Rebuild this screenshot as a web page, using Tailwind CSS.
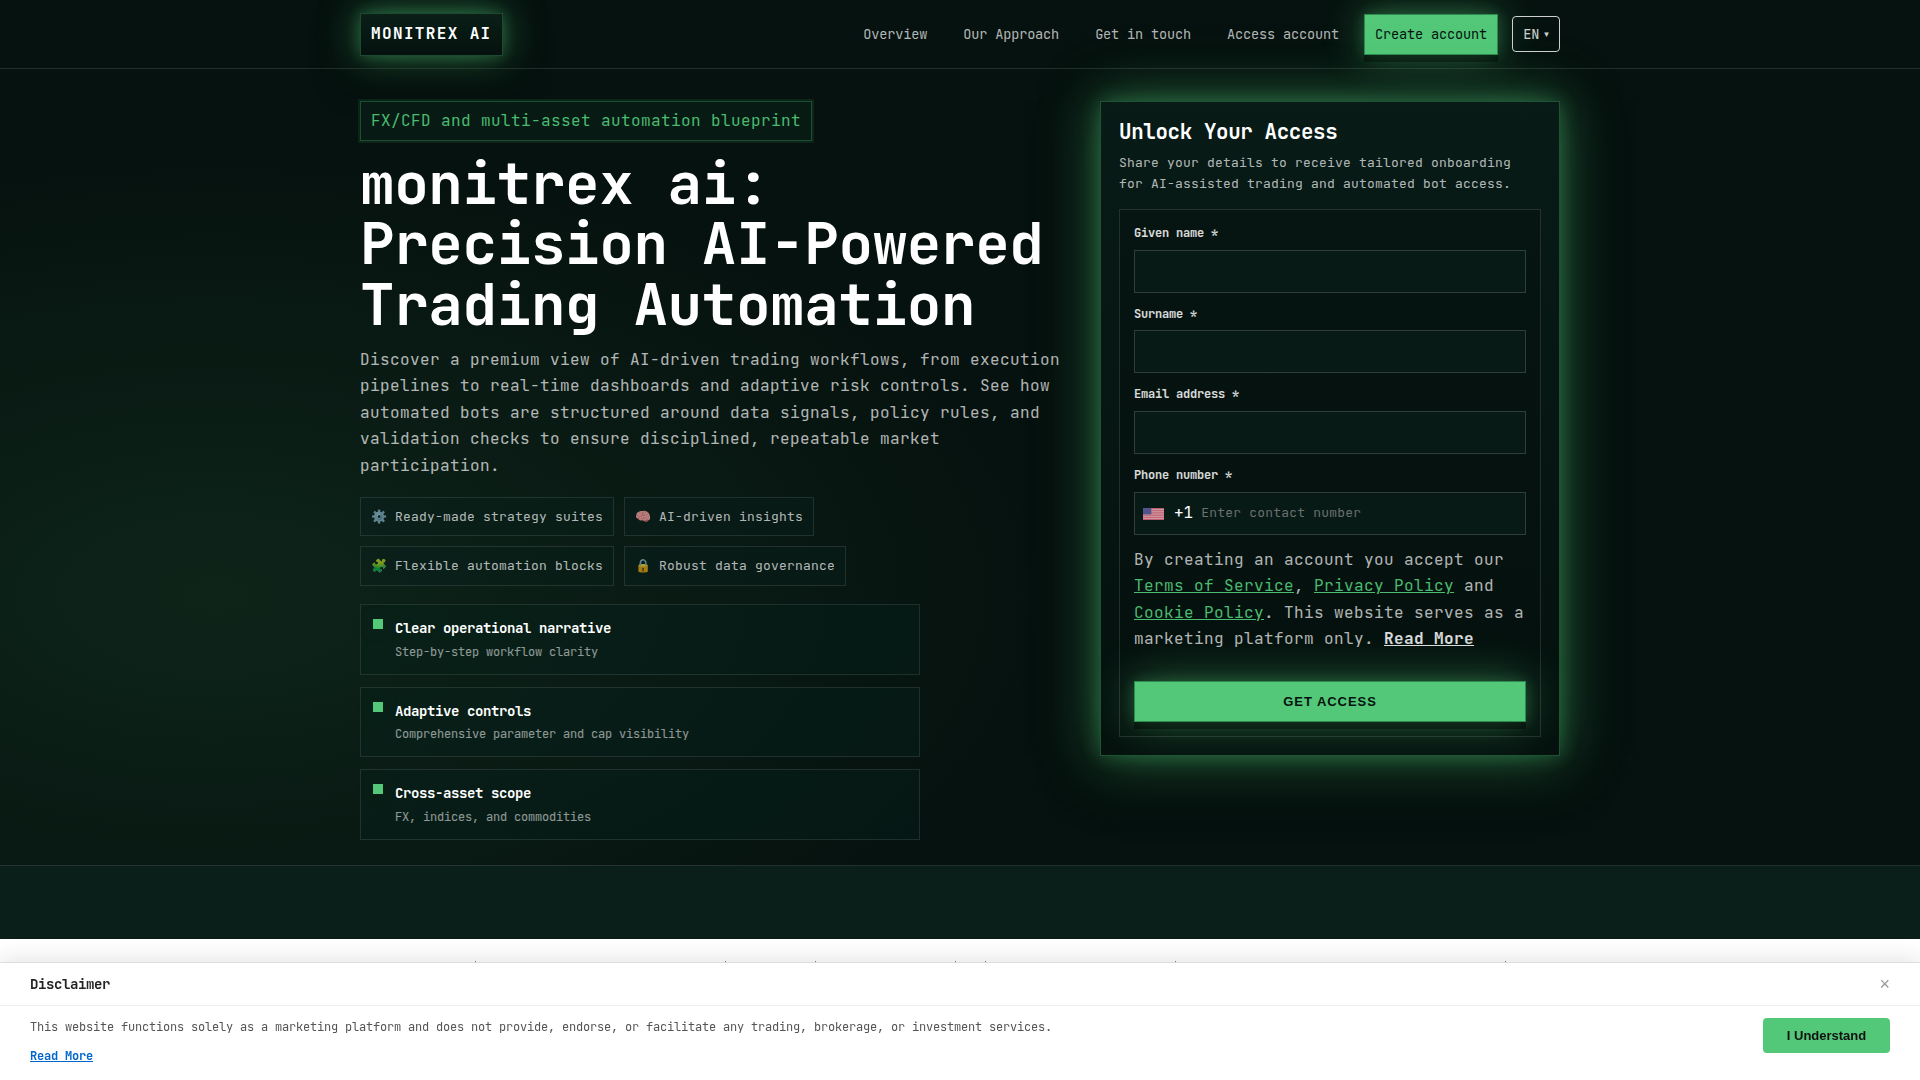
<!DOCTYPE html>
<html lang="en">
<head>
  <meta charset="UTF-8">
  <title>monitrex ai</title>
  <script src="https://cdn.jsdelivr.net/npm/@tailwindcss/browser@4"></script>
</head>
<body class="bg-white font-['JetBrains_Mono','DejaVu_Sans_Mono',monospace] text-base leading-[26.4px] tracking-[0.4px] text-white/70 h-[1080px] overflow-hidden">

  <div class="bg-[#06120f] bg-[radial-gradient(ellipse_840px_440px_at_215px_595px,rgba(80,200,120,0.1),transparent_100%)]">
    <!-- Header -->
    <header class="h-[69px] border-b border-white/12">
      <div class="w-[1200px] mx-auto h-[68px] flex items-center justify-between">
        <a class="h-[43px] px-2.5 flex items-center border border-[#1c4a2f] bg-linear-to-b from-[#0a1f17] to-[#05110e] text-white font-bold tracking-[1.36px] shadow-[0_0_14px_rgba(80,200,120,0.3),0_0_38px_rgba(80,200,120,0.5),0_14px_50px_rgba(0,0,0,0.4)]">MONITREX AI</a>
        <nav class="flex items-center text-[13.6px] tracking-[-0.16px]">
          <a class="mr-9">Overview</a>
          <a class="mr-9">Our Approach</a>
          <a class="mr-9">Get in touch</a>
          <a class="mr-[25px]">Access account</a>
          <a class="h-[41px] px-2.5 flex items-center border border-[#2f8a50] bg-[#52c878] text-[#06120f] shadow-[0_7px_0_rgba(0,0,0,0.4),0_0_14px_rgba(80,200,120,0.25),0_0_42px_rgba(80,200,120,0.45)]">Create account</a>
          <button class="ml-3.5 w-12 h-9 flex items-center justify-center gap-[5px] border border-white/80 rounded text-white/80">EN <span class="font-['DejaVu_Sans',sans-serif] text-[9px] leading-none">▾</span></button>
        </nav>
      </div>
    </header>

    <!-- Hero -->
    <section class="h-[797px] border-b border-white/12 pt-8">
      <div class="w-[1200px] mx-auto flex justify-between items-start">
        <div class="w-[702px]">
          <div class="w-fit py-1.5 px-2.5 border border-[#1c4f31] bg-[#071a14] text-[#4bbb70] ring-2 ring-[#50c878]/10">FX/CFD and multi-asset automation blueprint</div>
          <h1 class="mt-[11.4px] text-[57.6px] leading-[60.48px] font-bold tracking-[-0.38px] text-white whitespace-nowrap">monitrex ai:<br>Precision AI-Powered<br>Trading Automation</h1>
          <p class="mt-[12.7px]">Discover a premium view of AI-driven trading workflows, from execution pipelines to real-time dashboards and adaptive risk controls. See how automated bots are structured around data signals, policy rules, and validation checks to ensure disciplined, repeatable market participation.</p>

          <div class="mt-[18px] w-[560px] flex flex-wrap gap-2.5 text-[13px] leading-[21.45px] tracking-[0.2px]">
            <span class="border border-white/10 bg-[#08201c]/35 px-2.5 py-2 flex gap-2"><span class="tracking-normal">⚙️</span>Ready-made strategy suites</span>
            <span class="border border-white/10 bg-[#08201c]/35 px-2.5 py-2 flex gap-2"><span class="tracking-normal">🧠</span>AI-driven insights</span>
            <span class="border border-white/10 bg-[#08201c]/35 px-2.5 py-2 flex gap-2"><span class="tracking-normal">🧩</span>Flexible automation blocks</span>
            <span class="border border-white/10 bg-[#08201c]/35 px-2.5 py-2 flex gap-2"><span class="tracking-normal">🔒</span>Robust data governance</span>
          </div>

          <div class="mt-[18.3px] w-[560px] flex flex-col gap-3">
            <div class="h-[70.6px] border border-white/10 bg-[#06201c]/40 p-3 flex gap-3">
              <i class="mt-0.5 size-2.5 bg-[#52c878] shadow-[0_0_30px_rgba(80,200,120,0.12)]"></i>
              <div>
                <div class="text-sm leading-[23.1px] font-bold tracking-[-0.4px] text-white">Clear operational narrative</div>
                <div class="text-xs leading-[19.8px] tracking-[-0.2px] text-white/55 mt-[2.3px]">Step-by-step workflow clarity</div>
              </div>
            </div>
            <div class="h-[70.6px] border border-white/10 bg-[#06201c]/40 p-3 flex gap-3">
              <i class="mt-0.5 size-2.5 bg-[#52c878] shadow-[0_0_30px_rgba(80,200,120,0.12)]"></i>
              <div>
                <div class="text-sm leading-[23.1px] font-bold tracking-[-0.4px] text-white">Adaptive controls</div>
                <div class="text-xs leading-[19.8px] tracking-[-0.2px] text-white/55 mt-[2.3px]">Comprehensive parameter and cap visibility</div>
              </div>
            </div>
            <div class="h-[70.6px] border border-white/10 bg-[#06201c]/40 p-3 flex gap-3">
              <i class="mt-0.5 size-2.5 bg-[#52c878] shadow-[0_0_30px_rgba(80,200,120,0.12)]"></i>
              <div>
                <div class="text-sm leading-[23.1px] font-bold tracking-[-0.4px] text-white">Cross-asset scope</div>
                <div class="text-xs leading-[19.8px] tracking-[-0.2px] text-white/55 mt-[2.3px]">FX, indices, and commodities</div>
              </div>
            </div>
          </div>
        </div>

        <!-- Registration card -->
        <div class="shrink-0 w-[460px] h-[655px] p-[18px] border border-[#1e5233] bg-linear-to-b from-[#081b17] to-[#05110e] shadow-[0_0_18px_rgba(80,200,120,0.3),0_0_52px_rgba(80,200,120,0.5),0_14px_60px_rgba(0,0,0,0.35)]">
          <h2 class="text-[20.8px] leading-[24px] font-bold tracking-[-0.35px] text-white">Unlock Your Access</h2>
          <p class="mt-[7.6px] text-[13px] leading-[21.45px] tracking-[0.2px] whitespace-nowrap">Share your details to receive tailored onboarding<br>for AI-assisted trading and automated bot access.</p>

          <form class="mt-[14.5px] border border-white/12 bg-[#050f0d]/40 p-3.5">
            <label class="block text-xs leading-[19.8px] tracking-[-0.2px] font-bold text-white/85">Given name *</label>
            <input class="mt-1.5 block w-full h-[42.8px] border border-white/16 bg-[#071a16]">
            <label class="mt-3 block text-xs leading-[19.8px] tracking-[-0.2px] font-bold text-white/85">Surname *</label>
            <input class="mt-1.5 block w-full h-[42.8px] border border-white/16 bg-[#071a16]">
            <label class="mt-3 block text-xs leading-[19.8px] tracking-[-0.2px] font-bold text-white/85">Email address *</label>
            <input class="mt-1.5 block w-full h-[42.8px] border border-white/16 bg-[#071a16]">
            <label class="mt-3 block text-xs leading-[19.8px] tracking-[-0.2px] font-bold text-white/85">Phone number *</label>
            <div class="mt-1.5 h-[43px] border border-white/16 bg-[#071a16] flex items-center pl-2">
              <svg class="w-[21px] h-3 mt-px opacity-85" viewBox="0 0 21 12">
                <rect width="21" height="12" fill="#f4c4ca"/>
                <path d="M0 .5h21M0 2.3h21M0 4.2h21M0 6h21M0 7.8h21M0 9.7h21M0 11.5h21" stroke="#e0607a" stroke-width=".95"/>
                <rect width="8.3" height="6.4" fill="#5f5f9c"/>
              </svg>
              <span class="ml-2.5 text-white tracking-normal">+1</span>
              <span class="ml-2 pt-px text-[13px] tracking-[0.2px] text-[#6b706f]">Enter contact number</span>
            </div>
            <p class="mt-[12.3px] whitespace-nowrap">By creating an account you accept our<br><a class="text-[#4bbb70] underline">Terms of Service</a>, <a class="text-[#4bbb70] underline">Privacy Policy</a> and<br><a class="text-[#4bbb70] underline">Cookie Policy</a>. This website serves as a<br>marketing platform only. <a class="font-bold text-white/85 underline">Read More</a></p>
            <button class="mt-[28.4px] block w-full h-[41px] pt-px border border-[#2f8a50] bg-[#52c878] text-[#06120f] font-['Liberation_Sans',sans-serif] font-bold text-[13px] tracking-[0.95px] shadow-[0_7px_0_rgba(0,0,0,0.4),0_0_14px_rgba(80,200,120,0.25),0_0_46px_rgba(80,200,120,0.45)]">GET ACCESS</button>
          </form>
        </div>
      </div>
    </section>
  </div>
  <div class="h-[73px] bg-[#0a1f1a]"></div>

  
  <div class="relative h-[23px]">
    <i class="absolute bottom-0 left-[475px] size-px bg-[#777]"></i>
    <i class="absolute bottom-0 left-[725px] size-px bg-[#777]"></i>
    <i class="absolute bottom-0 left-[815px] size-px bg-[#777]"></i>
    <i class="absolute bottom-0 left-[955px] size-px bg-[#777]"></i>
    <i class="absolute bottom-0 left-[985px] size-px bg-[#777]"></i>
    <i class="absolute bottom-0 left-[1175px] size-px bg-[#777]"></i>
    <i class="absolute bottom-0 left-[1505px] size-px bg-[#777]"></i>
  </div>

  <!-- Disclaimer -->
  <div class="fixed inset-x-0 bottom-0 h-[118px] bg-white border-t border-[#ddd] shadow-[0_-4px_20px_rgba(0,0,0,0.1)]">
    <div class="h-[43px] px-[30px] pb-px border-b border-[#eee] flex items-center justify-between">
      <strong class="text-sm tracking-[-0.4px] text-[#222]">Disclaimer</strong>
      <button class="text-lg tracking-normal text-[#999] font-['Liberation_Sans',sans-serif]">×</button>
    </div>
    <div class="px-[30px] pt-3 flex items-start justify-between">
      <div class="text-xs leading-[19px] tracking-[-0.2px] text-[#555]">
        <p>This website functions solely as a marketing platform and does not provide, endorse, or facilitate any trading, brokerage, or investment services.</p>
        <a class="mt-2.5 block font-bold text-[#0066cc] underline">Read More</a>
      </div>
      <button class="w-[127px] h-[35px] pt-px rounded bg-[#52c878] text-[#111] font-['Liberation_Sans',sans-serif] font-bold text-[13px] tracking-normal">I Understand</button>
    </div>
  </div>
</body>
</html>
